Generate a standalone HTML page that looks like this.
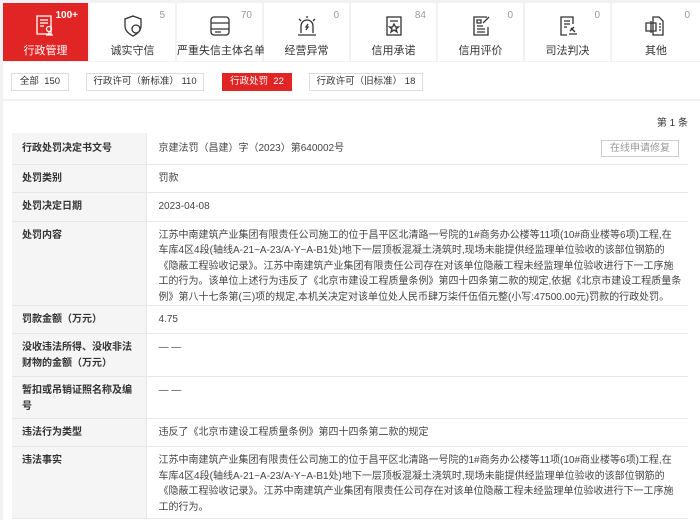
<!DOCTYPE html>
<html><head><meta charset="utf-8"><style>
*{margin:0;padding:0;box-sizing:border-box}
html,body{width:700px;height:520px;overflow:hidden}
body{background:#f2f2f4;font-family:"Liberation Sans","Noto Sans CJK SC",sans-serif;color:#333;font-size:11px;position:relative}
.tab{position:absolute;top:3px;width:85px;height:58px;background:#fff;text-align:center}
.tab.on{background:#e12424;color:#fff}
.tab svg{position:absolute;left:31px;top:11px}
.tab .n{position:absolute;top:7px;right:10px;font-size:10px;color:#999}
.tab.on .n{color:#fff;font-weight:bold;right:10px}
.tab .t{position:absolute;top:39px;left:0;right:0;font-size:11px;white-space:nowrap}
.bar{position:absolute;top:62px;left:3px;width:697px;height:37px;background:#fff}
.f{position:absolute;top:73px;height:18px;border:1px solid #ddd;background:#fff;font-size:9.5px;line-height:16px;padding:0 4px;color:#333;white-space:nowrap;text-align:center}
.f.on{background:#e12424;border-color:#e12424;color:#fff}
.main{position:absolute;top:101px;left:3px;width:697px;height:419px;background:#fff}
table{position:absolute;left:12px;top:133px;width:676px;border-collapse:collapse;table-layout:fixed}
td{border-bottom:1px solid #e8e8e8;vertical-align:top;font-size:10px;line-height:15.5px}
td.l{width:134px;background:#f5f5f5;font-weight:bold;padding:6px 10px 0;border-right:1px solid #e8e8e8}
td.v{padding:6px 4px 0 12px;color:#444}
.nw{white-space:nowrap;overflow:hidden}
</style></head><body>
<div class="tab on" style="left:3px"><svg width="24" height="24" viewBox="0 0 24 24" fill="none" stroke="#fff" stroke-width="1.3"><path d="M3 2h14v18H3z M6 6h8M6 9h8M6 12h4"/><circle cx="15" cy="15" r="2.5"/><path d="M12 21h7M15 17.5v3"/></svg><span class="n">100+</span><div class="t">行政管理</div></div>
<div class="tab" style="left:90px"><svg width="24" height="24" viewBox="0 0 24 24" fill="none" stroke="#333" stroke-width="1.3"><path d="M12 2l8 3v7c0 5-4 8-8 10-4-2-8-5-8-10V5z"/><circle cx="15" cy="15" r="4"/></svg><span class="n">5</span><div class="t">诚实守信</div></div>
<div class="tab" style="left:177px"><svg width="24" height="24" viewBox="0 0 24 24" fill="none" stroke="#333" stroke-width="1.3"><rect x="3" y="3" width="18" height="18" rx="3"/><path d="M3 9h18M3 15h18M7 18h6"/></svg><span class="n">70</span><div class="t">严重失信主体名单</div></div>
<div class="tab" style="left:264px"><svg width="24" height="24" viewBox="0 0 24 24" fill="none" stroke="#333" stroke-width="1.3"><path d="M6 19v-7a6 6 0 0112 0v7M3 21h18M12 2v2M4 5l2 2M20 5l-2 2M13 10l-2 3h2l-2 3"/></svg><span class="n">0</span><div class="t">经营异常</div></div>
<div class="tab" style="left:351px"><svg width="24" height="24" viewBox="0 0 24 24" fill="none" stroke="#333" stroke-width="1.3"><rect x="5" y="3" width="14" height="18"/><path d="M8 7h8M12 10l1.5 3h3l-2.5 2 1 3-3-2-3 2 1-3-2.5-2h3z"/></svg><span class="n">84</span><div class="t">信用承诺</div></div>
<div class="tab" style="left:438px"><svg width="24" height="24" viewBox="0 0 24 24" fill="none" stroke="#333" stroke-width="1.3"><path d="M18 3H5v18h14v-8M8 6h4v3H8zM8 12h6M8 15h8M8 18h8M14 9l6-6"/></svg><span class="n">0</span><div class="t">信用评价</div></div>
<div class="tab" style="left:525px"><svg width="24" height="24" viewBox="0 0 24 24" fill="none" stroke="#333" stroke-width="1.3"><path d="M17 10V3H5v18h6M8 7h6M8 10h6M8 13h3M13 20h8M15 14l4 4M14 17l4-4"/></svg><span class="n">0</span><div class="t">司法判决</div></div>
<div class="tab" style="left:612px;width:88px"><svg width="24" height="24" viewBox="0 0 24 24" fill="none" stroke="#333" stroke-width="1.3"><path d="M10 3h6l4 4v14H10zM3 9h10v8H3zM8 7v12M16 10h2M16 13h2M16 16h2"/></svg><span class="n">0</span><div class="t">其他</div></div>
<div class="bar"></div>
<div class="f" style="left:11px;width:58px">全部&nbsp; 150</div>
<div class="f" style="left:86px;width:118px">行政许可（新标准） 110</div>
<div class="f on" style="left:222px;width:70px">行政处罚&nbsp; 22</div>
<div class="f" style="left:309px;width:114px">行政许可（旧标准） 18</div>
<div class="main"></div>
<div style="position:absolute;top:114px;right:12px;font-size:10px">第 1 条</div>
<table>
<tr style="height:31px"><td class="l" style="padding-top:8px">行政处罚决定书文号</td><td class="v" style="padding-top:8px">京建法罚（昌建）字（2023）第640002号<span style="float:right;border:1px solid #ccc;color:#999;padding:0 8px;line-height:15px;margin-top:-1px;margin-right:5px">在线申请修复</span></td></tr>
<tr style="height:28px"><td class="l">处罚类别</td><td class="v">罚款</td></tr>
<tr style="height:29px"><td class="l">处罚决定日期</td><td class="v">2023-04-08</td></tr>
<tr style="height:84px"><td class="l">处罚内容</td><td class="v nw">江苏中南建筑产业集团有限责任公司施工的位于昌平区北清路一号院的1#商务办公楼等11项(10#商业楼等6项)工程,在<br>车库4区4段(轴线A-21~A-23/A-Y~A-B1处)地下一层顶板混凝土浇筑时,现场未能提供经监理单位验收的该部位钢筋的<br>《隐蔽工程验收记录》。江苏中南建筑产业集团有限责任公司存在对该单位隐蔽工程未经监理单位验收进行下一工序施<br>工的行为。该单位上述行为违反了《北京市建设工程质量条例》第四十四条第二款的规定,依据《北京市建设工程质量条<br>例》第八十七条第(三)项的规定,本机关决定对该单位处人民币肆万柒仟伍佰元整(小写:47500.00元)罚款的行政处罚。</td></tr>
<tr style="height:28px"><td class="l">罚款金额（万元）</td><td class="v">4.75</td></tr>
<tr style="height:43px"><td class="l">没收违法所得、没收非法财物的金额（万元）</td><td class="v">— —</td></tr>
<tr style="height:42px"><td class="l">暂扣或吊销证照名称及编号</td><td class="v">— —</td></tr>
<tr style="height:28px"><td class="l">违法行为类型</td><td class="v">违反了《北京市建设工程质量条例》第四十四条第二款的规定</td></tr>
<tr style="height:72px"><td class="l">违法事实</td><td class="v nw">江苏中南建筑产业集团有限责任公司施工的位于昌平区北清路一号院的1#商务办公楼等11项(10#商业楼等6项)工程,在<br>车库4区4段(轴线A-21~A-23/A-Y~A-B1处)地下一层顶板混凝土浇筑时,现场未能提供经监理单位验收的该部位钢筋的<br>《隐蔽工程验收记录》。江苏中南建筑产业集团有限责任公司存在对该单位隐蔽工程未经监理单位验收进行下一工序施<br>工的行为。</td></tr>
</table>
</body></html>
